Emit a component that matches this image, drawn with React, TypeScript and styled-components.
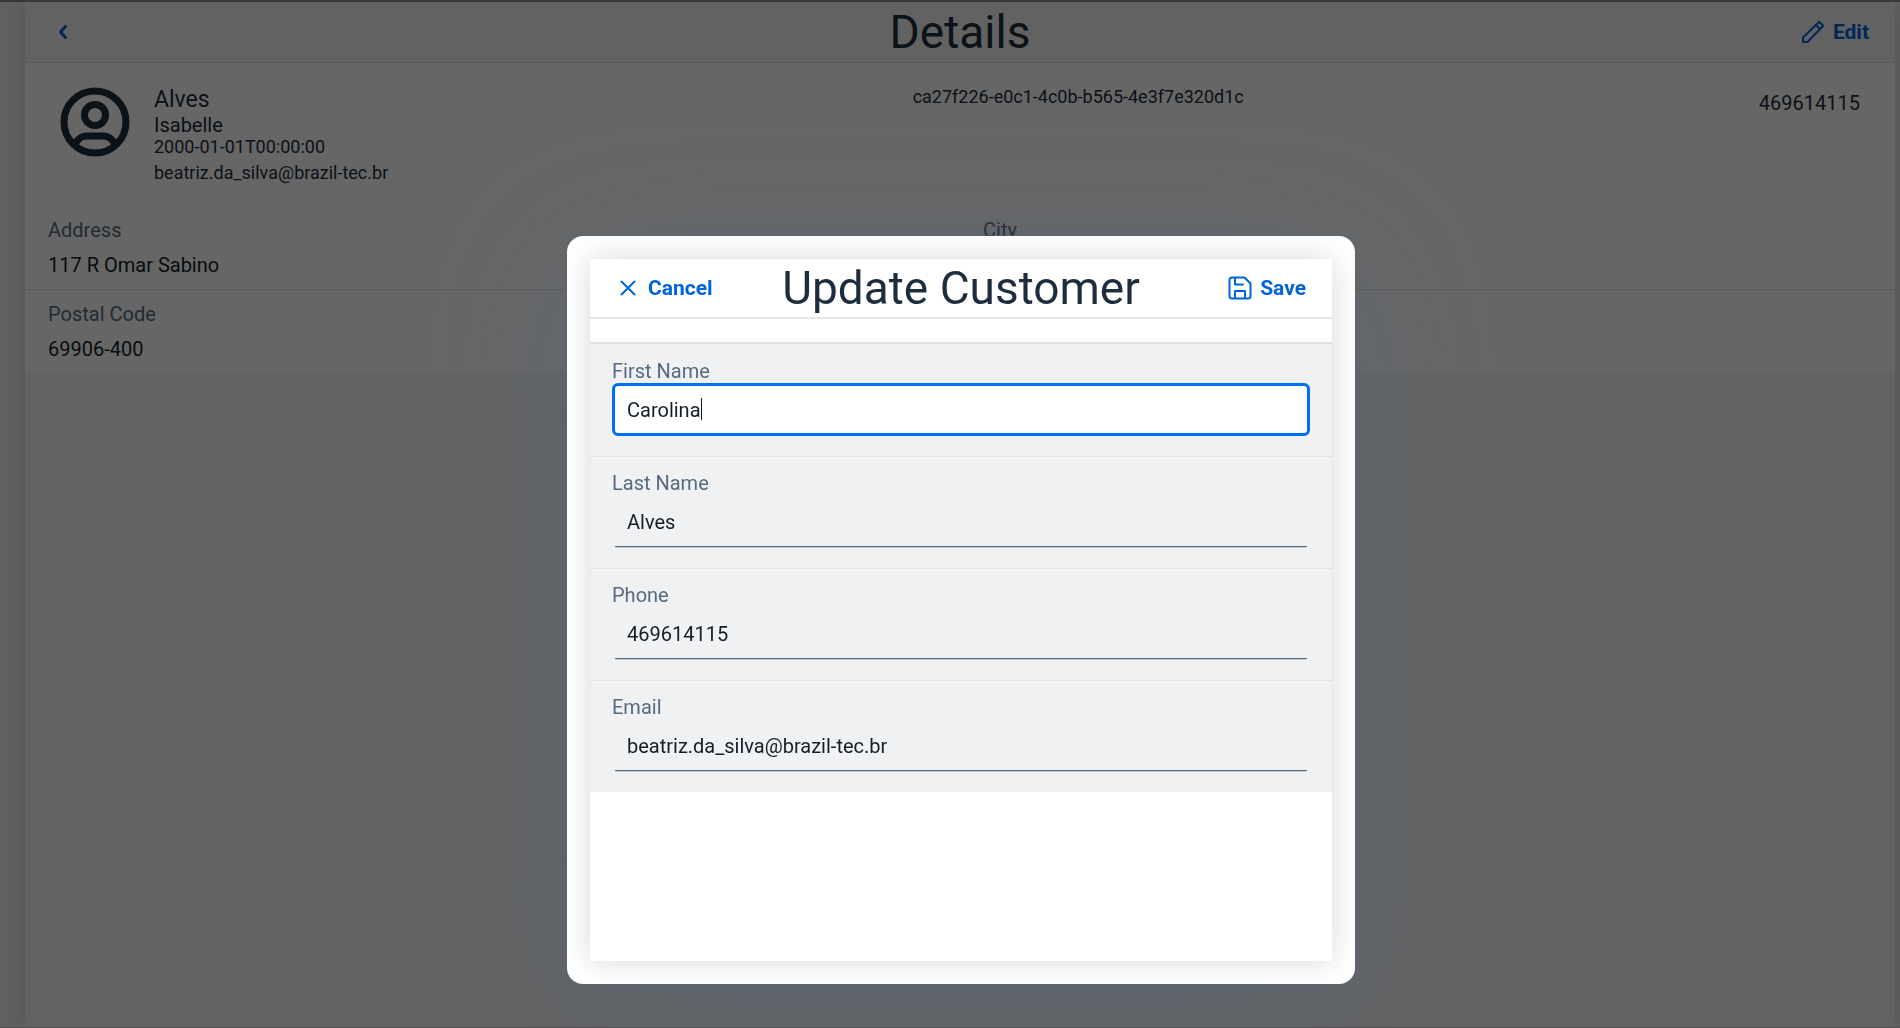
import React, { useLayoutEffect, useRef, useState } from "react";
import styled, { createGlobalStyle, css } from "styled-components";

const GlobalStyle = createGlobalStyle`
  * { box-sizing: border-box; }
  body {
    margin: 0;
    background: #f0f1f0;
    color: #131e29;
    font: 400 20px/24px Roboto, "Noto Sans", sans-serif;
  }
  h1, h2, p, dl, dd { margin: 0; }
  button, input { font: inherit; }
`;

const Shell = styled.div`
  display: flex;
  flex-direction: column;
  min-height: 100vh;
  padding: 0 5px 0 25px;
  border-top: 2px solid #8a8a8a;
  border-bottom: 1px solid #d4d0d2;
  overflow: hidden;
`;

const Page = styled.main`
  flex: 1;
  background: #f5f5f5;
  box-shadow: 0 0 24px rgba(0, 0, 0, 0.14);
`;

const Bar = styled.header<{ $modal?: boolean }>`
  display: grid;
  grid-template-columns: 1fr auto 1fr;
  align-items: center;
  height: ${(p) => (p.$modal ? 60 : 61)}px;
  padding: 0 26px;
  border-bottom: ${(p) => (p.$modal ? "2px solid #e5e6e7" : "1px solid #e0e0e0")};
`;

const Title = styled.h1`
  grid-column: 2;
  color: #1d2d3e;
  font-size: 46px;
  font-weight: 400;
  line-height: 56px;
`;

const BarButton = styled.button<{ $end?: boolean }>`
  display: flex;
  align-items: center;
  gap: 8px;
  justify-self: ${(p) => (p.$end ? "end" : "start")};
  padding: 0;
  border: 0;
  background: none;
  color: #0064d9;
  font-size: 21px;
  font-weight: 700;
  line-height: 24px;
`;

const Icon = styled.svg<{ $size: number }>`
  display: block;
  flex: none;
  width: ${(p) => p.$size}px;
  height: ${(p) => p.$size}px;
  fill: none;
  stroke: currentColor;
  stroke-linecap: round;
  stroke-linejoin: round;
`;

const Summary = styled.section`
  display: grid;
  grid-template-columns: 9fr 7fr 3fr;
  padding: 23px 35px 22px;
  background: #fff;
  color: #1d2d3e;
`;

const Profile = styled.div`
  display: flex;
  align-items: flex-start;
  gap: 24px;
`;

const Avatar = styled.div`
  padding-top: 1px;
  color: #1d2d3e;
`;

const Name = styled.h2`
  font-size: 23px;
  font-weight: 400;
  line-height: 28px;
`;

const Line = styled.p`
  line-height: 22px;
`;

const SmallLine = styled.p<{ $spaced?: boolean }>`
  margin-top: ${(p) => (p.$spaced ? 4 : 0)}px;
  font-size: 18px;
  line-height: 22px;
`;

const Phone = styled.p`
  padding-top: 5px;
  text-align: right;
`;

const Fields = styled.dl`
  display: grid;
  grid-template-columns: 1fr 1fr;
  padding: 12px 23px;
  background: #fff;

  & + & {
    border-top: 1px solid #e0e0e0;
  }
`;

const Field = styled.div`
  display: grid;
  gap: 11px;
  align-content: start;

  & + & {
    padding-left: 23px;
  }
`;

const FieldName = styled.dt`
  color: #556b82;
`;

const Overlay = styled.div`
  position: fixed;
  inset: 0;
  display: flex;
  justify-content: center;
  padding: 236px 5px 44px 27px;
  background: rgba(0, 0, 0, 0.6);
`;

const Dialog = styled.div`
  display: flex;
  width: 788px;
  padding: 23px;
  border-radius: 16px;
  background: #fff;
  box-shadow:
    0 0 0 1px rgba(85, 107, 130, 0.5),
    0 28px 140px rgba(85, 107, 130, 0.42);
`;

const Sheet = styled.div`
  flex: 1;
  min-width: 0;
  background: #fff;
  box-shadow: 0 0 28px rgba(0, 0, 0, 0.16);
`;

const Form = styled.form`
  margin-top: 23px;
  border-top: 2px solid #e1e2e3;
`;

const FormRow = styled.div`
  display: flex;
  flex-direction: column;
  height: 112px;
  padding: 15px 22px 0;
  background: #eff1f2;

  & + & {
    border-top: 1px solid #e2e3e5;
    padding-top: 14px;
  }
`;

const Label = styled.label`
  color: #556b82;
`;

const InputBox = styled.div`
  position: relative;
  display: flex;
`;

const TextInput = styled.input<{ $active?: boolean }>`
  flex: 1;
  min-width: 0;
  height: 53px;
  padding: 0 12px;
  border: 3px solid transparent;
  border-radius: 6px;
  background: none;
  color: #131e29;
  outline: none;
  ${(p) =>
    p.$active
      ? css`
          border-color: #0070f2;
          background: #fff;
          caret-color: transparent;
        `
      : css`
          background: linear-gradient(#556b82 1px, #bcc5ce 1px) center bottom / calc(100% - 6px) 2px
            no-repeat border-box;
        `}
`;

const Caret = styled.span`
  position: absolute;
  top: 15px;
  width: 1px;
  height: 22px;
  background: #131e29;
`;

function BackIcon() {
  return (
    <Icon $size={24} viewBox="0 0 24 24" strokeWidth={3}>
      <path d="M14.500 6.500 9.500 12l5 5.500" />
    </Icon>
  );
}

function PencilIcon() {
  return (
    <Icon $size={24} viewBox="0 0 24 24" strokeWidth={2}>
      <path d="M2 22v-4.500L18.200 1.800l4 4L6.500 22ZM15 5l4 4" />
    </Icon>
  );
}

function CloseIcon() {
  return (
    <Icon $size={24} viewBox="0 0 24 24" strokeWidth={2}>
      <path d="m5.500 5.500 13 13M18.500 5.500l-13 13" />
    </Icon>
  );
}

function SaveIcon() {
  return (
    <Icon $size={24} viewBox="0 0 24 24" strokeWidth={2}>
      <path d="M4 1.500h12.500l6 6V20a2.500 2.500 0 0 1-2.500 2.500H4A2.500 2.500 0 0 1 1.500 20V4A2.500 2.500 0 0 1 4 1.500Z" />
      <path d="M7 2v6.500h8M7 22v-7h10v7" />
    </Icon>
  );
}

function PersonIcon() {
  return (
    <Icon $size={70} viewBox="0 0 70 70" strokeWidth={7}>
      <circle cx="35" cy="35" r="31" />
      <circle cx="35" cy="28" r="10.500" />
      <path d="M16 56c2-4 6-7 11-7h16c5 0 9 3 11 7" />
    </Icon>
  );
}

type EditFieldProps = { id: string; label: string; initial: string; type?: string; active?: boolean };

function EditField({ id, label, initial, type = "text", active }: EditFieldProps) {
  const [value, setValue] = useState(initial);
  const [caretX, setCaretX] = useState(0);
  const input = useRef<HTMLInputElement>(null);

  useLayoutEffect(() => {
    if (!active || !input.current) return;
    const style = getComputedStyle(input.current);
    const context = document.createElement("canvas").getContext("2d");
    if (!context) return;
    context.font = `${style.fontSize} ${style.fontFamily}`;
    setCaretX(15 + Math.ceil(context.measureText(value).width));
  }, [active, value]);

  return (
    <FormRow>
      <Label htmlFor={id}>{label}</Label>
      <InputBox>
        <TextInput
          id={id}
          ref={input}
          type={type}
          value={value}
          $active={active}
          onChange={(e) => setValue(e.target.value)}
        />
        {active && <Caret style={{ left: caretX }} />}
      </InputBox>
    </FormRow>
  );
}

export default function App() {
  return (
    <>
      <GlobalStyle />
      <Shell>
        <Page>
          <Bar>
            <BarButton type="button" aria-label="Back">
              <BackIcon />
            </BarButton>
            <Title>Details</Title>
            <BarButton type="button" $end>
              <PencilIcon />
              Edit
            </BarButton>
          </Bar>
          <Summary>
            <Profile>
              <Avatar>
                <PersonIcon />
              </Avatar>
              <div>
                <Name>Alves</Name>
                <Line>Isabelle</Line>
                <SmallLine>2000-01-01T00:00:00</SmallLine>
                <SmallLine $spaced>beatriz.da_silva@brazil-tec.br</SmallLine>
              </div>
            </Profile>
            <SmallLine>ca27f226-e0c1-4c0b-b565-4e3f7e320d1c</SmallLine>
            <Phone>469614115</Phone>
          </Summary>
          <Fields>
            <Field>
              <FieldName>Address</FieldName>
              <dd>117 R Omar Sabino</dd>
            </Field>
            <Field>
              <FieldName>City</FieldName>
            </Field>
          </Fields>
          <Fields>
            <Field>
              <FieldName>Postal Code</FieldName>
              <dd>69906-400</dd>
            </Field>
          </Fields>
        </Page>
      </Shell>
      <Overlay>
        <Dialog role="dialog" aria-modal="true" aria-labelledby="dialog-title">
          <Sheet>
            <Bar $modal>
              <BarButton type="button">
                <CloseIcon />
                Cancel
              </BarButton>
              <Title as="h2" id="dialog-title">
                Update Customer
              </Title>
              <BarButton type="submit" form="customer" $end>
                <SaveIcon />
                Save
              </BarButton>
            </Bar>
            <Form id="customer" onSubmit={(e) => e.preventDefault()}>
              <EditField id="first-name" label="First Name" initial="Carolina" active />
              <EditField id="last-name" label="Last Name" initial="Alves" />
              <EditField id="phone" label="Phone" initial="469614115" type="tel" />
              <EditField id="email" label="Email" initial="beatriz.da_silva@brazil-tec.br" type="email" />
            </Form>
          </Sheet>
        </Dialog>
      </Overlay>
    </>
  );
}
